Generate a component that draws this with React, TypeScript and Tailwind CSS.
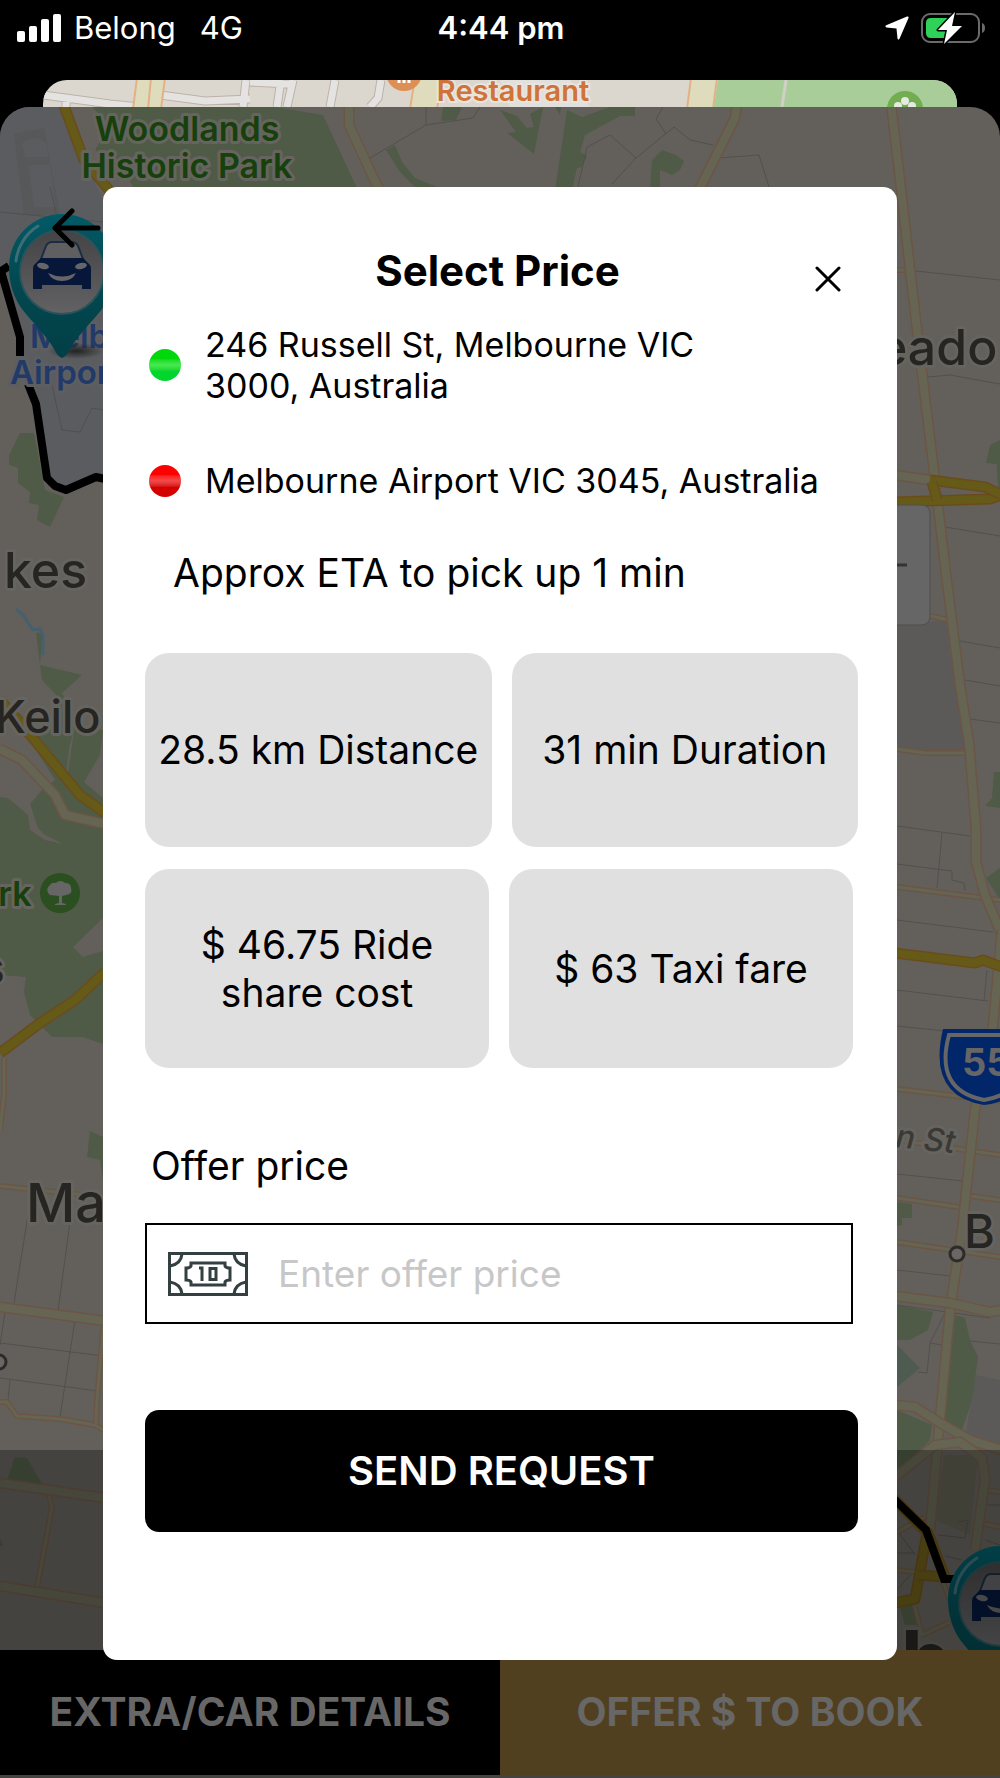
import { useState } from "react";

const stats = [
  ["28.5 km Distance", "31 min Duration"],
  ["$ 46.75 Ride share cost", "$ 63 Taxi fare"],
];

const minorStreets = [
  "426,107 426,125 370,158",
  "426,125 473,118 480,107",
  "578,187 587,147 610,135 636,158 612,184",
  "636,158 674,127 690,140 713,145",
  "663,107 656,119 666,134",
  "718,158 759,155 769,187",
  "28,1215 14,1303",
  "73,1200 58,1311",
  "0,1343 103,1356",
  "75,1320 60,1417",
  "5,1312 0,1345",
  "0,1378 98,1391",
  "10,1380 8,1400",
  "0,212 103,222",
  "50,187 60,230",
  "52,385 62,430 80,432 92,408 103,410",
  "916,271 1000,280",
  "928,377 950,375 1000,384",
  "945,527 1000,536",
  "960,641 1000,648",
  "965,680 1000,686",
  "970,719 1000,723",
  "897,826 970,836",
  "942,833 937,888",
  "897,864 952,871 952,880 964,883 965,891",
  "897,920 993,932",
  "897,990 988,1001",
  "987,970 984,1001",
  "897,1026 945,1031",
  "897,1174 963,1181",
  "897,1270 951,1276",
  "897,1305 990,1318",
  "945,1313 930,1343 927,1373 918,1372",
  "930,1343 942,1345",
  "970,1341 1000,1344",
  "897,1530 915,1555",
  "897,1553 915,1553",
  "910,1575 897,1590",
  "938,1535 965,1538 968,1520 958,1522",
  "945,1556 962,1560",
  "985,1505 1000,1505",
  "985,1540 1000,1545",
];

const minorRoads = [
  "0,1186 103,1197",
  "0,1402 7,1402 17,1416 60,1419 95,1425 105,1431",
  "104,1320 97,1400 96,1424",
  "48,1493 52,1507 37,1588",
  "4,1058 4,1095 0,1130",
  "897,270 908,270",
  "931,616 948,620",
  "897,749 925,753 966,753",
  "897,887 1000,900",
  "897,1089 1000,1101",
  "897,1140 1000,1155",
  "897,1198 965,1208",
  "970,1196 1000,1200",
  "897,1242 1000,1257",
  "985,1490 1000,1492",
  "980,1523 1000,1527",
  "897,1570 915,1572",
  "897,1532 925,1517",
  "915,1607 922,1635 950,1622",
  "942,1580 958,1620",
];

const mainRoads = [
  "349,103 349,125 380,192",
  "737,103 735,118 698,192",
  "891,103 900,180 910,269 923,381 935,480 947,582 960,685 969,743 976,828 976,862 985,895 1004,940",
  "1002,930 993,1025 975,1110 962,1230 950,1310 938,1440 930,1530",
  "0,749 22,760 55,795 65,815 105,824",
  "0,1307 105,1321",
  "0,1483 105,1498",
  "0,1586 105,1603",
  "895,475 930,480",
  "895,1296 950,1303 990,1312 1002,1310",
  "895,1405 915,1407 940,1423 970,1440 1002,1450",
  "895,1477 935,1445 960,1442 982,1458 985,1480 975,1550",
];

const highways = [
  "63,103 84,160 115,197",
  "0,700 22,725 80,795 105,813",
  "0,1053 40,1023 75,1000 105,972",
  "895,502 990,499 1002,495",
  "930,480 985,487 1002,495",
  "932,482 937,500",
  "895,953 975,963 983,960 1002,967",
  "927,1533 915,1599 895,1603",
  "918,1575 945,1577 928,1533 890,1495",
];

const parks = [
  "92,107 110,125 95,150 128,178 135,190 358,190 355,184 323,115 275,107",
  "443,107 462,107 456,120 441,121",
  "386,150 395,145 402,162 415,178 437,187 415,187 400,172",
  "500,110 517,116 527,128 534,127 530,114 543,107 534,154 507,133 516,132",
  "555,107 561,107 560,115",
  "567,110 582,117 610,107 635,107 635,116 620,116 585,135 580,152 587,156 582,167 577,168 572,190 555,190",
  "652,160 662,150 676,155 684,161 680,170 672,175 660,170 660,190 650,190",
  "20,433 34,433 45,490 64,497 50,527 37,520 39,505 29,503 30,492 18,483 18,468 9,465 9,455",
  "36,633 43,632 40,665 82,675 62,693 66,700 64,720 75,725 70,745 35,740 50,715 56,695 42,680",
  "20,725 70,742 66,775 75,790 103,808 103,918 73,947 83,957 103,951 103,1044 83,1037 52,1037 43,1028 30,1015 24,992 26,977 0,975 0,797 8,798 28,815 30,830 45,840 63,844 45,835 38,828 30,804 42,790 55,780",
  "75,725 103,730 100,755 84,782 103,798 103,812 66,785",
  "90,1131 103,1137 103,1180 100,1160 87,1157",
  "15,1457 27,1458 42,1484 7,1480",
  "0,1538 3,1546 0,1546",
  "1000,440 990,445 986,463 997,464 998,488 1000,488",
  "994,772 1000,772 1000,808 985,806 992,798",
  "986,878 1000,868 1000,900",
  "897,1202 912,1204 912,1218 902,1218 902,1225 897,1226",
  "897,1305 933,1312 928,1330 910,1340 897,1340",
  "955,1315 965,1318 970,1340 978,1357 972,1400 960,1436 942,1430",
  "897,1410 932,1425 930,1440 897,1475",
  "900,1608 912,1605 917,1625 905,1625",
];

const Road = ({ points, width, fill, edge }: { points: string; width: number; fill: string; edge: string }) => (
  <g fill="none" strokeLinejoin="round">
    <polyline points={points} stroke={edge} strokeWidth={width} />
    <polyline points={points} stroke={fill} strokeWidth={width - 3} />
  </g>
);

const CarPin = ({ x, y }: { x: number; y: number }) => (
  <g transform={`translate(${x} ${y})`}>
    <ellipse cx="14" cy="82" rx="28" ry="8" fill="url(#pinShadow)" />
    <path d="M0 89Q-4 88-8 80C-16 66-29 54-40 40Q-53 22-53-2A53 53 0 0 1 53-2Q53 22 40 40C29 54 16 66 8 80Q4 88 0 89Z" fill="url(#pin)" />
    <path d="M-46-8A47 47 0 0 1-24-43" fill="none" stroke="#3f6d75" strokeWidth="3" strokeLinecap="round" />
    <circle cy="3" r="43" fill="#2b5359" />
    <circle cy="3" r="41" fill="url(#pinFace)" />
    <path d="M-21-10-16-23q2-4 6-4H10q4 0 6 4l5 13Z" fill="#5f5f62" stroke="#1c2c42" strokeWidth="2" />
    <path d="M-21-11H21l7 7q1 1 1 5V20H20V16H-20v4h-9V1q0-4 1-5Z" fill="#061739" />
    <ellipse cx="-19" cy="-3" rx="6" ry="3" fill="#66666a" transform="rotate(12 -19 -3)" />
    <ellipse cx="19" cy="-3" rx="6" ry="3" fill="#66666a" transform="rotate(-12 19 -3)" />
    <path d="M-14 4Q0 11 14 4 10 12 0 12T-14 4Z" fill="#66666a" />
  </g>
);

const MapBackdrop = () => (
  <svg
    className="absolute inset-0 h-full w-full"
    viewBox="0 107 1000 1671"
    preserveAspectRatio="xMidYMin slice"
    fontFamily="Inter, sans-serif"
    aria-hidden="true"
  >
    <defs>
      <linearGradient id="pin" x1="0" x2="0" y1="0" y2="1">
        <stop offset="0" stopColor="#025a66" />
        <stop offset="0.5" stopColor="#024850" />
        <stop offset="1" stopColor="#023f46" />
      </linearGradient>
      <linearGradient id="pinFace" x1="0" x2="0" y1="0" y2="1">
        <stop offset="0" stopColor="#444446" />
        <stop offset="1" stopColor="#626264" />
      </linearGradient>
      <radialGradient id="pinShadow">
        <stop offset="0" stopColor="#222" />
        <stop offset="1" stopColor="#222" stopOpacity="0" />
      </radialGradient>
    </defs>
    <rect y="107" width="1000" height="1671" fill="#63605c" />
    <polygon points="0,107 60,107 103,200 103,479 66,490 48,480 36,404 20,356 20,337 0,271" fill="#5a5c5f" />
    <path d="M14 134 44 128 60 215H24Z" fill="#565859" />
    <path d="M22 143q14-10 24 0l3 14H25ZM28 165h22l6 42H34Z" fill="#5a5c5f" />
    <polygon points="897,625 950,620 966,753 897,749" fill="#5c5a59" />
    <polygon points="975,1375 1000,1380 1000,1445 965,1440" fill="#5c5a59" />
    {parks.map((p) => (
      <polygon key={p} points={p} fill="#4f5b47" />
    ))}
    <polygon points="897,1345 920,1368 897,1387" fill="#4d5b50" />
    <polygon points="944,1455 978,1455 970,1535 935,1520" fill="#5e5c50" />
    <polyline points="16,609 23,615 33,630 40,629 43,635 43,655" fill="none" stroke="#44606f" strokeWidth="3" />
    {minorStreets.map((p) => (
      <polyline key={p} points={p} fill="none" stroke="#52504d" strokeWidth="1" />
    ))}
    {minorRoads.map((p) => (
      <Road key={p} points={p} width={6} fill="#666553" edge="#6b5646" />
    ))}
    {mainRoads.map((p) => (
      <Road key={p} points={p} width={11} fill="#666553" edge="#6b5646" />
    ))}
    {highways.map((p) => (
      <Road key={p} points={p} width={11} fill="#665a19" edge="#6a4c1c" />
    ))}

    <polyline
      points="9,266 1,271 20,337 20,356"
      fill="none"
      stroke="#000"
      strokeWidth="8"
      strokeLinejoin="round"
    />
    <polyline
      points="28,384 36,404 47,478 55,486 66,490 96,477 105,479"
      fill="none"
      stroke="#000"
      strokeWidth="8"
      strokeLinejoin="round"
    />
    <polyline points="890,1495 926,1530 944,1579 958,1579" fill="none" stroke="#000" strokeWidth="8" />

    <g stroke="#4e4e4e" fill="#666">
      <rect x="850" y="505" width="80" height="120" rx="8" />
      <path d="M880 565H907" stroke="#333" strokeWidth="3" />
    </g>

    <g stroke="#66645f" strokeWidth="6" strokeLinejoin="round" paintOrder="stroke" fontWeight="600">
      <g fill="#17400d" fontSize="34" textAnchor="middle">
        <text x="187" y="141">Woodlands</text>
        <text x="187" y="178">Historic Park</text>
        <text x="15" y="906">rk</text>
      </g>
      <g fill="#213a69" stroke="#5c5e61" fontSize="33">
        <text x="30" y="348">Melb</text>
        <text x="10" y="384">Airport</text>
      </g>
      <g fill="#262522" fontWeight="500">
        <text x="4" y="588" fontSize="50">kes</text>
        <text x="-5" y="733" fontSize="45">Keilo</text>
        <text x="-20" y="984" fontSize="46">s</text>
        <text x="26" y="1222" fontSize="54">Ma</text>
        <text x="878" y="365" fontSize="50">eado</text>
        <text x="964" y="1248" fontSize="47">B</text>
        <text x="901" y="1688" fontSize="80" fontWeight="700">b</text>
      </g>
      <text x="895" y="1147" fontSize="32" fontWeight="500" fontStyle="italic" fill="#3a3936" transform="rotate(6 895 1147)">
        n St
      </text>
    </g>

    <g fill="#696663" stroke="#2c2b29" strokeWidth="3">
      <circle cx="957" cy="1254" r="7" />
      <circle cx="-1" cy="1362" r="7" />
    </g>

    <circle cx="60" cy="893" r="20" fill="#2b4f20" />
    <path
      d="M50 895a6 6 0 0 1 0-10q2-3 6-2a6 6 0 0 1 9 0q6 0 6 5 2 6-5 7l-4 1v7l4 1v1H55v-1l4-1v-7Z"
      fill="#666"
    />

    <path d="M943 1029H1025Q1042 1098 984 1105 927 1096 943 1029Z" fill="#02266a" />
    <path d="M949 1035H1020Q1034 1092 984 1100 934 1090 949 1035Z" fill="#02266a" stroke="#666" strokeWidth="4" />
    <text x="962" y="1076" fontSize="38" fontWeight="700" fill="#666">
      55
    </text>

    <CarPin x={62} y={269} />
    <CarPin x={1001} y={1601} />
    <rect y="1450" width="1000" height="328" fill="#000" opacity="0.3" />
  </svg>
);

const BackSheet = () => (
  <svg
    className="block h-full w-full"
    viewBox="43 80 914 27"
    preserveAspectRatio="xMidYMin slice"
    fontFamily="Inter, sans-serif"
    aria-hidden="true"
  >
    <rect x="43" y="80" width="914" height="27" fill="#dbd7cf" />
    <g fill="none" stroke="#bdb2a8" strokeWidth="9">
      <path d="M43 95 110 104 140 107M160 95 205 101 250 99M66 100V110M246 80 243 107M250 82 290 84M281 80 277 107M293 80 287 107M335 80 330 107M381 80 378 98 370 107" />
    </g>
    <g fill="none" stroke="#e4e3e2" strokeWidth="7">
      <path d="M43 95 110 104 140 107M160 95 205 101 250 99M66 100V110M246 80 243 107M250 82 290 84M281 80 277 107M293 80 287 107M335 80 330 107M381 80 378 98 370 107" />
    </g>
    <g fill="#dfdcbd" stroke="#e3b183" strokeWidth="2">
      <path d="M137 78H165L161 109H133ZM415 78H442L437 109H410ZM691 78H717L713 109H687Z" />
      <path d="M151 78 148 109" />
    </g>
    <path d="M500 80 510 107H590L570 80Z" fill="#e2e0dd" />
    <path d="M718 80H957V107H714Z" fill="#a9cd98" />
    <path d="M786 80 782 107" stroke="#d1cfc8" strokeWidth="3" />
    <circle cx="404" cy="73" r="18" fill="#dd8f55" />
    <path d="M399 78V83M404 78V83M409 78V83" stroke="#fff" strokeWidth="3" />
    <circle cx="905" cy="109" r="18" fill="#72ad51" />
    <g fill="#e6e8e2">
      <circle cx="905" cy="101" r="4" />
      <circle cx="898" cy="106" r="4" />
      <circle cx="912" cy="106" r="4" />
    </g>
    <text x="513" y="101" fontSize="29" fontWeight="600" fill="#cf7339" stroke="#e8e4de" strokeWidth="4" paintOrder="stroke" textAnchor="middle">
      Restaurant
    </text>
  </svg>
);

const StatusBar = () => (
  <header className="grid h-14 grid-cols-3 items-center pr-[15px] pl-[17px] text-[31px] leading-10 text-white">
    <div className="flex items-center gap-3">
      <svg width="45" height="28" viewBox="0 0 45 28" fill="#fff" aria-label="Signal">
        <rect y="17" width="8" height="11" rx="2" />
        <rect x="12" y="12" width="8" height="16" rx="2" />
        <rect x="24" y="5" width="8" height="23" rx="2" />
        <rect x="36" width="8" height="28" rx="2" />
      </svg>
      <span>Belong</span>
      <span className="ml-3">4G</span>
    </div>
    <time className="text-center font-semibold">4:44 pm</time>
    <div className="flex items-center justify-end gap-3">
      <svg width="24" height="24" viewBox="0 0 24 24" fill="#fff" aria-label="Location">
        <path d="M22 .5 1.200 9.200Q-.6 10.500 1.500 11.500L11.500 12.500 12.500 22.500Q13.200 24.600 14.500 22.800L23.500 2Q24 0 22 .5Z" />
      </svg>
      <svg width="64" height="32" viewBox="0 0 64 32" aria-label="Battery charging">
        <rect x="1" y="2" width="57" height="28" rx="8" fill="none" stroke="#6b6b6b" strokeWidth="2" />
        <path d="M61 11q3 1 3 5t-3 5Z" fill="#6b6b6b" />
        <path d="M10 6H27V26H10q-5 0-5-5V11q0-5 5-5Z" fill="#30d158" />
        <path d="M34 0 17 18H26L23 32 41 14H31Z" fill="#fff" stroke="#000" strokeWidth="3" strokeLinejoin="round" paintOrder="stroke" />
      </svg>
    </div>
  </header>
);

const BillIcon = () => (
  <svg className="shrink-0" width="80" height="44" viewBox="0 0 80 44" fill="none" stroke="#343f42" strokeWidth="3" aria-hidden="true">
    <rect x="1.500" y="1.500" width="77" height="41" />
    <path d="M14 2Q13 12 2 14M66 2Q67 12 78 14M14 42Q13 32 2 30M66 42Q67 32 78 30" />
    <path d="M23 11H57V14Q58 16 62 16V28Q58 28 57 30V33H23V30Q22 28 18 28V16Q22 16 23 14Z" />
    <path d="M31 16H34V29M42 16.500H48V27.500H42Z" />
  </svg>
);

const Stop = ({ color, children }: { color: string; children: React.ReactNode }) => (
  <li className="flex items-center gap-6">
    <span className={`size-8 shrink-0 rounded-full bg-linear-to-b from-30% via-50% to-70% ${color}`} />
    <span>{children}</span>
  </li>
);

const PriceDialog = () => {
  const [price, setPrice] = useState("");

  return (
    <div
      role="dialog"
      aria-labelledby="dialog-title"
      className="relative mx-[103px] mt-20 rounded-[14px] bg-white pt-[60px] pr-[39px] pb-32 pl-[42px] text-[39px] leading-[48px] text-black"
    >
      <div className="grid grid-cols-[48px_1fr_56px]">
        <h1 id="dialog-title" className="col-start-2 text-center text-[42px] leading-12 font-bold">
          Select Price
        </h1>
        <button type="button" aria-label="Close" className="mr-1 flex h-8 items-center justify-center self-end">
          <svg width="26" height="26" viewBox="0 0 26 26" stroke="#000" strokeWidth="3" strokeLinecap="round">
            <path d="M2 2 24 24M24 2 2 24" />
          </svg>
        </button>
      </div>

      <ul className="mt-[29px] flex flex-col gap-[54px] pl-1 text-[34px] leading-[41px]">
        <Stop color="from-[#00d80c] via-[#46e950] to-[#00d62c]">
          246 Russell St, Melbourne VIC
          <br />
          3000, Australia
        </Stop>
        <Stop color="from-[#ff0000] via-[#f04a4a] to-[#d40000]">Melbourne Airport VIC 3045, Australia</Stop>
      </ul>

      <p className="mt-12 pl-7">Approx ETA to pick up 1 min</p>

      <div className="mt-14 grid grid-cols-2 gap-5">
        {stats[0].map((text) => (
          <div key={text} className="flex h-[194px] items-center justify-center rounded-3xl bg-[#e0e0e0] px-3 text-center">
            {text}
          </div>
        ))}
      </div>
      <div className="mt-[22px] mr-[5px] grid grid-cols-2 gap-5">
        {stats[1].map((text) => (
          <div key={text} className="flex h-[199px] items-center justify-center rounded-3xl bg-[#e0e0e0] px-9 text-center">
            {text}
          </div>
        ))}
      </div>

      <label htmlFor="offer-price" className="mt-[74px] block pl-[6px]">
        Offer price
      </label>
      <div className="mt-[33px] mr-[5px] flex h-[101px] items-center gap-[30px] border-2 border-black px-[21px]">
        <BillIcon />
        <input
          id="offer-price"
          type="text"
          inputMode="decimal"
          placeholder="Enter offer price"
          value={price}
          onChange={(e) => setPrice(e.target.value)}
          className="w-full min-w-0 text-[37px] outline-none placeholder:text-[#c7c7c7]"
        />
      </div>

      <button type="button" className="mt-[86px] h-[122px] w-full rounded-[14px] bg-black text-[40px] font-semibold text-white">
        SEND REQUEST
      </button>
    </div>
  );
};

export default function App() {
  return (
    <div className="flex min-h-screen flex-col bg-black font-['Inter',sans-serif]">
      <StatusBar />
      <div className="mx-[43px] mt-6 h-[27px] overflow-hidden rounded-t-3xl">
        <BackSheet />
      </div>
      <main className="relative flex-1 overflow-hidden rounded-t-[30px] pb-[118px]">
        <MapBackdrop />
        <button type="button" aria-label="Back" className="absolute top-[101px] left-[51px]">
          <svg width="50" height="40" viewBox="0 0 50 40" fill="none" stroke="#000" strokeWidth="5" strokeLinecap="round" strokeLinejoin="round">
            <path d="M21 3 4 20 21 37M4 20H47" />
          </svg>
        </button>
        <nav className="absolute inset-x-0 bottom-[3px] grid h-[125px] grid-cols-2 text-[39px] font-bold text-[#676767]">
          <button type="button" className="bg-black">
            EXTRA/CAR DETAILS
          </button>
          <button type="button" className="bg-[#50401f]">
            OFFER $ TO BOOK
          </button>
        </nav>
        <PriceDialog />
      </main>
    </div>
  );
}
